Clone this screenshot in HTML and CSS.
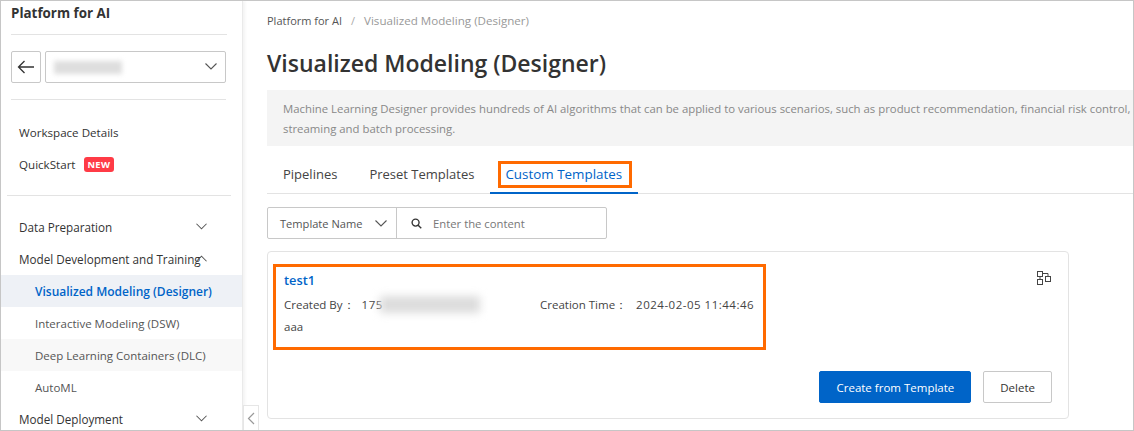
FILE: index.html
```html
<!DOCTYPE html>
<html lang="en">
<head>
<meta charset="utf-8">
<title>Visualized Modeling (Designer)</title>
<link rel="stylesheet" href="styles.css">
</head>
<body>
<div class="frame">
  <aside class="sidebar">
    <div class="brand">Platform for AI</div>
    <div class="workspace-row">
      <button class="back" aria-label="Back"><svg width="18" height="14" viewBox="0 0 18 14"><path d="M7.5 1 1.500 7l6 6M1.500 7H17" fill="none" stroke="#333" stroke-width="1.300"/></svg></button>
      <div class="ws-select"><span class="blur-name"></span><svg class="chev" width="12" height="7" viewBox="0 0 12 7"><path d="M.5.5 6 6 11.500.5" fill="none" stroke="#555" stroke-width="1.100"/></svg></div>
    </div>
    <nav class="top-nav">
      <a class="nav-item">Workspace Details</a>
      <a class="nav-item">QuickStart <span class="new">NEW</span></a>
    </nav>
    <nav class="main-nav">
      <a class="nav-item group">Data Preparation<svg class="chev" width="11" height="7" viewBox="0 0 12 7"><path d="M.5.5 6 6 11.500.5" fill="none" stroke="#555" stroke-width="1.100"/></svg></a>
      <a class="nav-item group">Model Development and Training<svg class="chev" width="11" height="7" viewBox="0 0 12 7"><path d="M.5 6.500 6 1l5.500 5.500" fill="none" stroke="#555" stroke-width="1.100"/></svg></a>
      <a class="nav-item sub active">Visualized Modeling (Designer)</a>
      <a class="nav-item sub">Interactive Modeling (DSW)</a>
      <a class="nav-item sub tint">Deep Learning Containers (DLC)</a>
      <a class="nav-item sub">AutoML</a>
      <a class="nav-item group">Model Deployment<svg class="chev" width="11" height="7" viewBox="0 0 12 7"><path d="M.5.5 6 6 11.500.5" fill="none" stroke="#555" stroke-width="1.100"/></svg></a>
    </nav>
  </aside>
  <div class="collapse"><svg width="8" height="13" viewBox="0 0 8 13"><path d="M7 1 1.500 6.500 7 12" fill="none" stroke="#999" stroke-width="1.200"/></svg></div>
  <main class="main">
    <div class="crumbs"><span>Platform for AI</span><i>/</i><span class="cur">Visualized Modeling (Designer)</span></div>
    <h1>Visualized Modeling (Designer)</h1>
    <div class="notice">
      <p>Machine Learning Designer provides hundreds of AI algorithms that can be applied to various scenarios, such as product recommendation, financial risk control, and advertising prediction, and supports</p>
      <p>streaming and batch processing.</p>
    </div>
    <div class="tabs">
      <a class="tab">Pipelines</a>
      <a class="tab">Preset Templates</a>
      <a class="tab on"><span class="mark">Custom Templates</span></a>
    </div>
    <div class="filter">
      <div class="f-select">Template Name<svg width="12" height="7" viewBox="0 0 12 7"><path d="M.5.5 6 6 11.500.5" fill="none" stroke="#555" stroke-width="1.100"/></svg></div>
      <div class="f-input"><svg width="11" height="11" viewBox="0 0 12 12"><circle cx="5" cy="5" r="3.800" fill="none" stroke="#333" stroke-width="1.500"/><path d="m7.800 7.800 3.400 3.400" stroke="#333" stroke-width="1.500"/></svg><span>Enter the content</span></div>
    </div>
    <section class="card">
      <div class="card-top">
        <div class="info">
          <a class="name">test1</a>
          <div class="meta">
            <span class="by">Created By：<span class="val by-val">175</span><span class="smear"></span></span>
            <span class="time">Creation Time：<span class="val time-val">2024-02-05 11:44:46</span></span>
          </div>
          <div class="desc">aaa</div>
        </div>
        <svg class="flow" width="14" height="14" viewBox="0 0 14 14"><g fill="none" stroke="#444" stroke-width="1"><rect x=".5" y=".5" width="5" height="5"/><rect x=".5" y="8.500" width="5" height="5"/><rect x="8.500" y="5.500" width="5" height="5"/><path d="M5.500 2.500H11v3M3 5.500v3"/></g></svg>
      </div>
      <div class="actions">
        <button class="btn primary">Create from Template</button>
        <button class="btn">Delete</button>
      </div>
    </section>
  </main>
</div>
</body>
</html>
```
FILE: styles.css
```css
* { box-sizing: border-box; }
html, body { margin: 0; padding: 0; height: 100%; overflow: hidden; }
body { font-family: "Open Sans", "Noto Sans", sans-serif; font-size: 12px; color: #333; background: #fff; }
.frame { position: relative; width: 1134px; height: 431px; border: 1px solid #c6c6c6; display: flex; overflow: hidden; background: #fff; }

.sidebar { width: 242px; flex: none; border-right: 1px solid #eaeaea; box-shadow: 2px 0 3px rgba(0,0,0,.05); }
.brand { margin: 0 15px 0 10px; height: 34px; border-bottom: 1px solid #e3e3e3; font-size: 13.400px; font-weight: 700; line-height: 24px; color: #333; }
.workspace-row { margin: 16px 16px 0 10px; padding-bottom: 16px; border-bottom: 1px solid #e3e3e3; display: flex; gap: 4px; }
.back { width: 30px; height: 32px; padding: 0; border: 1px solid #c8c8c8; border-radius: 2px; background: #fff; display: flex; align-items: center; justify-content: center; }
.ws-select { flex: 1; height: 32px; border: 1px solid #c8c8c8; border-radius: 2px; display: flex; align-items: center; justify-content: space-between; padding: 0 8px 2px 8px; }
.blur-name { width: 68px; height: 13px; margin-top: 3px; background: #dedede; filter: blur(2.500px); }
.top-nav { margin: 16px 11px 0 6px; padding-bottom: 15px; border-bottom: 1px solid #e3e3e3; }
.nav-item { display: flex; align-items: center; height: 32px; padding-left: 12px; font-size: 11.600px; color: #333; white-space: nowrap; }
.new { margin-left: 8px; padding: 0 4px; height: 15px; line-height: 15px; border-radius: 3px; background: #ff3b46; color: #fff; font-size: 9.300px; font-weight: 700; letter-spacing: .3px; }
.main-nav { margin-top: 15px; }
.nav-item.group { padding-left: 18px; padding-right: 35px; position: relative; font-size: 11.700px; }
.nav-item.group .chev { position: absolute; right: 35px; top: 12px; }
.nav-item.sub { padding-left: 34px; color: #555; font-size: 11.500px; }
.nav-item.tint { background: #f8f8f8; }
.nav-item.active { background: #eef1f6; color: #0064c8; font-weight: 600; font-size: 12px; }

.collapse { position: absolute; left: 242px; bottom: -1px; width: 16px; height: 26px; border: 1px solid #e6e6e6; background: #fff; display: flex; align-items: center; justify-content: center; }

.main { flex: 1; min-width: 0; padding-left: 24px; overflow: hidden; }
.crumbs { height: 38px; padding-top: 11px; line-height: 17px; font-size: 11px; color: #555; white-space: nowrap; }
.crumbs i { font-style: normal; margin: 0 9px; color: #aaa; }
.crumbs .cur { color: #999; font-size: 11.600px; }
h1 { margin: 0; height: 51px; padding-top: 6px; font-size: 23px; font-weight: 600; line-height: 36px; color: #333; white-space: nowrap; }
.notice { width: 880px; height: 56px; background: #f4f4f4; padding: 9px 16px; color: #888; font-size: 11.360px; line-height: 20px; white-space: nowrap; overflow: hidden; }
.notice p { margin: 0; }
.tabs { display: flex; height: 48px; border-bottom: 1px solid #e3e3e3; width: 880px; }
.tab { height: 48px; display: flex; align-items: center; padding: 7px 16px 0; font-size: 13px; color: #444; white-space: nowrap; }
.tab.on { align-items: flex-end; padding: 0 6px 4px 8px; border-bottom: 2px solid #0064c8; color: #0064c8; font-weight: 500; font-size: 13.400px; }
.mark { border: 3px solid #ff6a00; padding: 0 7px 0 4px; line-height: 21px; }
.filter { display: flex; width: 340px; height: 32px; margin-top: 13px; border: 1px solid #c8c8c8; border-radius: 2px; }
.f-select { width: 129px; border-right: 1px solid #c8c8c8; display: flex; align-items: center; justify-content: space-between; padding: 0 9px 0 12px; font-size: 11.100px; color: #555; }
.f-input { flex: 1; display: flex; align-items: center; gap: 11px; padding-left: 14px; font-size: 11.300px; color: #777; }
.card { width: 802px; height: 168px; margin-top: 12px; border: 1px solid #e3e3e3; border-radius: 4px; padding: 12px 16px 15px 5px; display: flex; flex-direction: column; justify-content: space-between; }
.card-top { display: flex; justify-content: space-between; align-items: flex-start; }
.info { width: 493px; height: 86px; border: 3px solid #ff6a00; padding: 2px 8px; }
.name { display: block; height: 23px; line-height: 22px; font-size: 12.800px; font-weight: 600; color: #0064c8; }
.meta { display: flex; height: 25px; align-items: center; font-size: 11.500px; color: #444; white-space: nowrap; }
.by { display: flex; align-items: center; width: 256px; }
.val { letter-spacing: .5px; }
.by-val { margin-left: 7px; }
.time-val { margin-left: 9px; }
.smear { width: 100px; height: 17px; margin-left: -3px; background: #dcdcdc; filter: blur(4px); }
.desc { height: 22px; line-height: 20px; font-size: 11.500px; color: #444; }
.flow { flex: none; margin: 7px 1px 0 0; }
.actions { display: flex; justify-content: flex-end; gap: 12px; }
.btn { height: 32px; padding: 0 16px; border: 1px solid #c8c8c8; border-radius: 2px; background: #fff; color: #333; font: 500 11.500px "Open Sans", "Noto Sans", sans-serif; }
.btn.primary { background: #0064c8; border-color: #0064c8; color: #fff; }
```
